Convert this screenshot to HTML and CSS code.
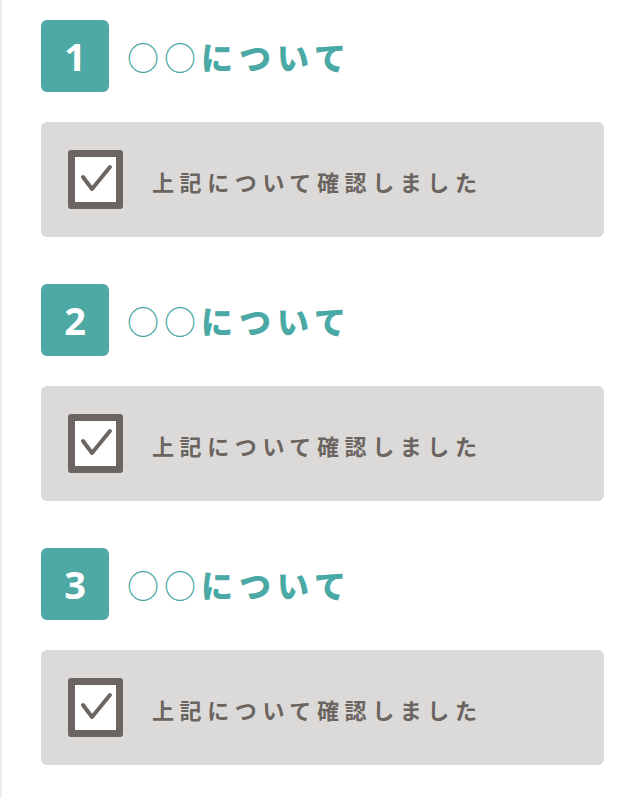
FILE: index.html
```html
<!DOCTYPE html>
<html lang="ja">
  <head>
    <meta charset="UTF-8" />
    <meta name="viewport" content="width=device-width, initial-scale=1.0" />
    <title>確認事項</title>
    <link rel="stylesheet" href="styles.css">
  </head>
  <body>
    <div class="page">
      <!-- 1 -->
      <section class="item">
        <div class="item--head">
          <span class="num">1</span>
          <h2><span class="mark">○○</span>について</h2>
        </div>
        <label class="confirm">
          <span class="box">
            <svg viewBox="0 0 41 45" width="41" height="45"><path d="M8 20 L17 32 L35 10" /></svg>
          </span>
          <span class="confirm--text">上記について確認しました</span>
        </label>
      </section>

      <!-- 2 -->
      <section class="item">
        <div class="item--head">
          <span class="num">2</span>
          <h2><span class="mark">○○</span>について</h2>
        </div>
        <label class="confirm">
          <span class="box">
            <svg viewBox="0 0 41 45" width="41" height="45"><path d="M8 20 L17 32 L35 10" /></svg>
          </span>
          <span class="confirm--text">上記について確認しました</span>
        </label>
      </section>

      <!-- 3 -->
      <section class="item">
        <div class="item--head">
          <span class="num">3</span>
          <h2><span class="mark">○○</span>について</h2>
        </div>
        <label class="confirm">
          <span class="box">
            <svg viewBox="0 0 41 45" width="41" height="45"><path d="M8 20 L17 32 L35 10" /></svg>
          </span>
          <span class="confirm--text">上記について確認しました</span>
        </label>
      </section>
    </div>
  </body>
</html>
```

FILE: styles.css
```css
* {
  box-sizing: border-box;
  padding: 0;
  margin: 0;
}
body {
  background: #fff;
  font-family: "Noto Sans CJK JP", "Noto Sans", sans-serif;
}
.page {
  min-height: 100vh;
  border-left: 2px solid #ededed;
  padding: 20px 16px 0 39px;
}
.item {
  margin-bottom: 47px;
}
.item--head {
  display: flex;
  align-items: center;
  gap: 18px;
  height: 72px;
}
.num {
  display: flex;
  align-items: center;
  justify-content: center;
  width: 68px;
  height: 72px;
  border-radius: 6px;
  background-color: #4ea9a5;
  color: #fff;
  font-family: "Open Sans", sans-serif;
  font-size: 38px;
  font-weight: 700;
}
.item--head h2 {
  font-size: 32px;
  font-weight: 900;
  letter-spacing: 6px;
  color: #4aa8a5;
  line-height: 1;
}
.item--head .mark {
  font-weight: 400;
  letter-spacing: 5px;
}
.confirm {
  display: flex;
  align-items: center;
  gap: 29px;
  height: 115px;
  margin-top: 30px;
  padding: 0 27px;
  border-radius: 6px;
  background-color: #dcdad9;
  cursor: pointer;
}
.box {
  display: block;
  width: 55px;
  height: 59px;
  border: 7px solid #6d6561;
  border-radius: 3px;
  background: #fff;
}
.box svg {
  display: block;
}
.box path {
  fill: none;
  stroke: #6d6561;
  stroke-width: 4;
  stroke-linecap: round;
  stroke-linejoin: round;
}
.confirm--text {
  font-size: 22px;
  font-weight: 700;
  letter-spacing: 5.6px;
  color: #6b6561;
  padding-top: 3px;
}
```
